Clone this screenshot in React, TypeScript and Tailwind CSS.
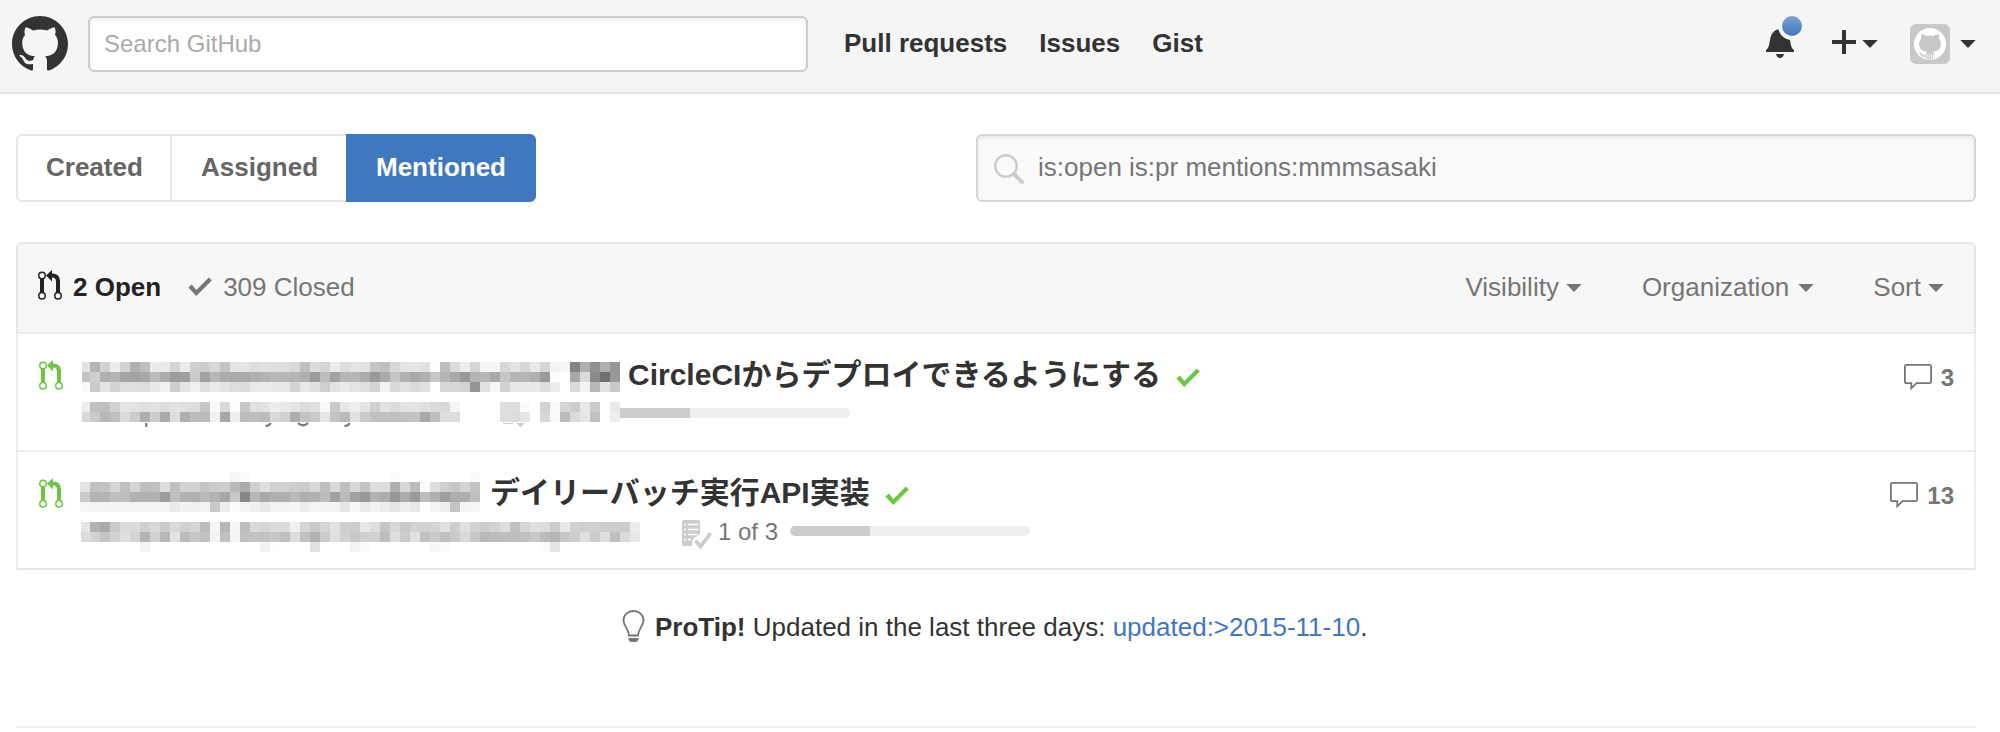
import React from "react";

const MARK =
  "M8 0C3.58 0 0 3.58 0 8c0 3.54 2.29 6.53 5.47 7.59.4.07.55-.17.55-.38 0-.19-.01-.82-.01-1.49-2.01.37-2.53-.49-2.69-.94-.09-.23-.48-.94-.82-1.13-.28-.15-.68-.52-.01-.53.63-.01 1.08.58 1.23.82.72 1.21 1.87.87 2.33.66.07-.52.28-.87.51-1.07-1.78-.2-3.64-.89-3.64-3.95 0-.87.31-1.59.82-2.15-.08-.2-.36-1.02.08-2.12 0 0 .67-.21 2.2.82.64-.18 1.32-.27 2-.27.68 0 1.36.09 2 .27 1.53-1.04 2.2-.82 2.2-.82.44 1.1.16 1.92.08 2.12.51.56.82 1.27.82 2.15 0 3.07-1.87 3.75-3.65 3.95.29.25.54.73.54 1.48 0 1.07-.01 1.93-.01 2.2 0 .21.15.46.55.38A8.013 8.013 0 0016 8c0-4.42-3.58-8-8-8z";

function Caret({ className }: { className: string }) {
  return (
    <svg className={className} width="16" height="8" viewBox="0 0 16 8">
      <path d="M.300 0h15.400L8 8z" fill="currentColor" />
    </svg>
  );
}

function PullRequestIcon({ className }: { className: string }) {
  return (
    <svg className={className} width="24" height="30" viewBox="0 0 24 30" fill="none" stroke="currentColor">
      <path d="M4 9v13" strokeWidth="4" />
      <path d="M20 22V11.500Q20 5.500 14 5.500H12" strokeWidth="4" />
      <path d="M8 5.500L14 0v11.500z" fill="currentColor" stroke="none" />
      <circle cx="4" cy="5.600" r="3.250" strokeWidth="1.500" />
      <circle cx="4" cy="25.700" r="3.250" strokeWidth="1.500" />
      <circle cx="20" cy="25.700" r="3.250" strokeWidth="1.500" />
    </svg>
  );
}

function Check({ className }: { className: string }) {
  return (
    <svg className={className} width="24" height="20" viewBox="0 0 24 20">
      <path d="M20.800.500L23.800 3.600 8.200 19 .400 10.600 3.800 7.400 8.400 12.900z" fill="currentColor" />
    </svg>
  );
}

function CommentIcon() {
  return (
    <svg width="28" height="28" viewBox="0 0 28 28" fill="none" stroke="currentColor" strokeWidth="1.800">
      <path d="M2.300.9h23.400q1.400 0 1.400 1.400v15.400q0 1.400-1.400 1.400H12.500L7.300 24.300V19.100h-5Q.9 19.100.9 17.700V2.300Q.9.9 2.300.9z" />
    </svg>
  );
}

function TaskIcon() {
  return (
    <svg width="30" height="30" viewBox="0 0 30 30">
      <path d="M2 0h14q2 0 2 2v12l-6 4-2 4v4H2q-2 0-2-2V2q0-2 2-2z" fill="#ccc" />
      <path d="M2 4.500h2M6 4.500h10.500M2 9.500h2M6 9.500h10.500M2 14.500h2M6 14.500h9M2 19.500h2M6 19.500h3" stroke="#fff" strokeWidth="1.300" />
      <path d="M27.500 14L18.500 24l-4-4" stroke="#fff" strokeWidth="7" fill="none" />
      <path d="M27.300 12l2.700 2.600L18.500 29.500 12 22l2.700-2.700 3.800 4z" fill="#ccc" />
    </svg>
  );
}

type Strip = { w: number; h: number; first: number; rows: string[]; marks?: React.ReactNode };

/* Each pair of hex digits is the grey level of one 10px block. */
function Mosaic({ w, h, first, rows, marks }: Strip) {
  return (
    <svg className="block shrink-0" width={w} height={h} viewBox={`0 0 ${w} ${h}`} shapeRendering="crispEdges">
      {rows.map((row, y) =>
        row.split(" ").map((g, i) => (
          <rect
            key={`${y}-${i}`}
            x={i === 0 ? 0 : first + (i - 1) * 10}
            y={y * 10}
            width={i === 0 ? first : 10}
            height="10"
            fill={`#${g}${g}${g}`}
          />
        ))
      )}
      {marks}
    </svg>
  );
}

const title1: Strip = {
  w: 538,
  h: 30,
  first: 8,
  rows: [
    "e3 b5 d2 ed d3 b0 bd eb ea d5 eb cf ce d7 c3 e4 e5 dc e1 df df d9 c0 dc d5 eb dd e4 e2 c5 bf d9 e4 e5 e1 fd be db ed d6 f4 f6 d8 e3 d6 e9 d6 f3 f6 84 af 91 af 96",
    "c4 d0 b0 b5 a5 a3 a8 bb ad 9d a0 ca a2 b8 ac aa aa b0 b3 b8 b6 b5 b0 9b bd a2 b6 b7 ac 9b ab c6 b1 a9 b0 c6 b6 a9 9a b3 b7 aa c6 b6 b5 b0 9a fd ff a8 da 8b 70 99",
    "fb cb e4 d2 df df de e9 f0 ce e6 f0 e0 ea e4 dd dc e9 ea e9 e8 d5 e8 e0 ce e3 ea e3 df d5 f3 da e2 dc e1 ff d8 d7 d4 96 e1 f7 d2 e8 e8 e8 df ec ff da f3 b8 e1 c9",
  ],
};

const meta1: Strip = {
  w: 538,
  h: 28,
  first: 8,
  rows: [
    "ed c0 c0 d1 e4 e3 df e2 dd e3 e0 dd c6 fa d9 fd c6 e0 e3 ed ea e4 db e1 f9 c9 e6 ef e3 cf e3 dc e3 e4 e0 da d9 f4 ff ff ff ff de de fb ff d2 f9 d5 cc e8 cb ff e8",
    "d8 cb b8 c0 db cd ae cd ab de af bd bb f1 a7 ee bd bf bb d9 d2 ad c3 ca e6 c4 b9 e2 cb c1 c1 c1 c1 c3 a9 be de dd ff ff ff ff dd dc e6 ff d8 fa bb db e6 c0 ff ee",
  ],
  marks: (
    <g shapeRendering="geometricPrecision">
      <path d="M63 21h2.500v4H63z" fill="#888" />
      <path d="M188.500 21q-1 3-5 3" fill="none" stroke="#777" strokeWidth="2.300" />
      <path d="M267.500 21q-1 3-5 3" fill="none" stroke="#777" strokeWidth="2.300" />
      <path d="M216 21q5 4.500 10 0" fill="none" stroke="#777" strokeWidth="2.300" />
      <path d="M421 21h10v1h-10zM434.500 21h8l-4 4.500z" fill="#ccc" />
    </g>
  ),
};

const title2: Strip = {
  w: 400,
  h: 40,
  first: 10,
  rows: [
    "ff ff ff ff ff ff ff ff ff ff ff ff ff ff ff f6 fb ff ff ff ff ff ff ff ff ff ff ff ff ff ff fb ff ff ff ff ff ff ff fa",
    "e4 c0 c4 d5 c0 d4 bf c0 de c0 d3 d3 c5 cb cd ba ac d0 df d2 d2 cd cc d8 bf d9 bf d8 c4 de dd b0 d7 bb fb dd cf c6 d4 c3",
    "cb b3 b4 be be b2 b1 b1 9d c0 b1 b1 bb b3 a8 c7 88 b7 a9 b0 b0 ba af b0 bc a1 bb a1 98 b3 ad 98 ab 9b be b0 9f ae b0 c0",
    "f6 f4 f4 f3 f4 f4 f4 f5 f4 ea f2 f0 f2 c9 ec fb f4 f0 e8 f3 f3 f5 ec f4 f3 f3 e5 f8 ea f3 ec e5 ee e8 ff f4 ee c5 f4 f6",
  ],
};

const meta2: Strip = {
  w: 559,
  h: 30,
  first: 9,
  rows: [
    "e6 b2 aa cb dc dc cf d9 cb d8 d0 d5 bc f6 b6 f6 be da d6 db db f0 d5 c9 d5 e2 cf cd e8 df c6 d9 c9 d3 d2 d4 e1 ce e0 d3 cd d2 dc c2 d4 e0 dc cc e8 d2 cf d0 ce cd cd ed",
    "dc d2 c4 d3 e0 d4 b5 d2 b8 e4 bc c8 c2 f3 c0 f5 c2 c3 c3 c7 c0 de c1 b2 cb e0 d2 c8 d0 d2 be df cb e1 c1 cb c0 ca d9 c8 ba bd bd bf c0 c8 bc b6 c6 cd df cd df c0 dc e8",
    "ff ff ff ff ff ff f4 ff ff ff ff ff ff ff ff ff ff ff f2 fd ff ff ff e2 ff ff ff f3 fc ff ff ff ff ff ff f8 fb ff ff ff ff ff ff ff ff ff fb e4 ff ff ff ff ff ff ff ff",
  ],
};

function Header() {
  return (
    <header className="flex h-[94px] items-start border-b-2 border-[#e5e5e5] bg-[#f5f5f5] pl-3 pr-6">
      <svg className="mt-4 shrink-0 text-[#333]" width="56" height="56" viewBox="0 0 16 16">
        <path d={MARK} fill="currentColor" />
      </svg>
      <div className="ml-5 mt-4 flex h-14 w-[720px] items-center rounded-[6px] border-2 border-[#ccc] bg-white pl-[14px] text-[24px] leading-none text-[#aaa] shadow-[inset_0_2px_4px_rgba(0,0,0,0.075)]">
        <span className="-mt-px">Search GitHub</span>
      </div>
      <nav className="ml-9 mt-[28px] flex gap-8 text-[26px] font-bold leading-[30px] text-[#333]">
        <a>Pull requests</a>
        <a>Issues</a>
        <a>Gist</a>
      </nav>
      <div className="ml-auto flex h-[92px] items-start text-[#333]">
        <svg className="mt-3" width="44" height="48" viewBox="0 0 44 48">
          <defs>
            <linearGradient id="dot" x1="0" y1="0" x2="0" y2="1">
              <stop offset="0" stopColor="#7aa1d3" />
              <stop offset="1" stopColor="#4078c0" />
            </linearGradient>
          </defs>
          <path d="M4 40v-2c3-2 3-5 4-10 1-7 5-11 10-11s9 4 10 11c1 5 1 8 4 10v2zM14 42h8q-1 4-4 4t-4-4z" fill="currentColor" />
          <circle cx="30" cy="14" r="14" fill="#f5f5f5" />
          <circle cx="30" cy="14" r="10" fill="url(#dot)" />
        </svg>
        <svg className="ml-[26px] mt-[30px]" width="24" height="24" viewBox="0 0 24 24">
          <path d="M10 0h4v10h10v4H14v10h-4V14H0v-4h10z" fill="currentColor" />
        </svg>
        <Caret className="ml-[6px] mt-10" />
        <svg className="ml-8 mt-6" width="40" height="40" viewBox="0 0 40 40">
          <rect width="40" height="40" rx="6" fill="#c8c8c8" />
          <circle cx="20" cy="20" r="16" fill="#fff" />
          <path
            d="M11.500 10.200q3 0 5 1.800 3.500-.8 7 0 2-1.800 5-1.800 1 2.600.5 4.800 2 2.500 2 5 0 7-8 7.800 1.300 1.500 1.300 3v4.500q-2 .7-4.300.7t-4.300-.7v-2.500q-4 .8-5.200-1.800-.8-1.800-2-2.500 2.500-.5 3.800 1.800 1.200 1.500 3.400.7.200-2 1.300-3.200-8-.8-8-7.800 0-2.500 2-5-.5-2.200.5-4.800z"
            fill="#c8c8c8"
          />
          <path d="M17 30v6M19.300 30v6M21.500 30v6M23.500 30v6" stroke="#fff" strokeWidth=".8" />
        </svg>
        <Caret className="ml-[10px] mt-10" />
      </div>
    </header>
  );
}

function Filters() {
  return (
    <div className="mt-10 flex h-[68px] justify-between">
      <div className="flex text-[26px] font-bold leading-[62px] text-[#666]">
        <a className="w-[156px] rounded-l-[6px] border-2 border-[#e5e5e5] pl-7">Created</a>
        <a className="w-[174px] border-y-2 border-[#e5e5e5] pl-[29px]">Assigned</a>
        <a className="w-[190px] rounded-r-[6px] border-y-2 border-[#4078c0] bg-[#4078c0] pl-[30px] text-white">Mentioned</a>
      </div>
      <div className="flex w-[1000px] rounded-[6px] border-2 border-[#d5d5d5] bg-[#fafafa] pl-4 text-[26px] leading-[62px] text-[#767676] shadow-[inset_0_2px_4px_rgba(0,0,0,0.075)]">
        <svg className="mt-[18px]" width="30" height="30" viewBox="0 0 30 30" fill="none" stroke="#ccc">
          <circle cx="12" cy="12" r="10.800" strokeWidth="2.400" />
          <path d="M20.500 20.500l7.500 7.500" strokeWidth="4" strokeLinecap="round" />
        </svg>
        <span className="ml-[14px]">is:open is:pr mentions:mmmsasaki</span>
      </div>
    </div>
  );
}

function Row({ title, titleStrip, metaStrip, comments, second }: { title: string; titleStrip: Strip; metaStrip: Strip; comments: number; second?: boolean }) {
  return (
    <li className={second ? "flex h-[118px] border-b-2 border-b-[#e5e5e5] pl-[21px] pr-5" : "flex h-[118px] border-b-2 border-b-[#eee] pl-[21px] pr-5"}>
      <PullRequestIcon className="mt-[26px] shrink-0 text-[#6cc644]" />
      <div className={second ? "ml-[17px] flex flex-col" : "ml-[19px] flex flex-col"}>
        <div className={second ? "flex h-[50px] pt-5" : "flex h-[58px] pt-7"}>
          <Mosaic {...titleStrip} />
          <h2
            className={
              second
                ? "mt-[1px] ml-[10px] whitespace-nowrap text-[30px] font-bold leading-[40px] text-[#333]"
                : "-mt-[7px] ml-[8px] whitespace-nowrap text-[30px] font-bold leading-[40px] text-[#333]"
            }
          >
            {title}
          </h2>
          <Check className={second ? "ml-[15px] mt-[14px] text-[#6cc644]" : "ml-[15px] mt-[6px] text-[#6cc644]"} />
        </div>
        {second ? (
          <div className="mt-5 flex h-[30px] pl-px">
            <Mosaic {...metaStrip} />
            <div className="ml-[42px] flex">
              <div className="-mt-[2px]">
                <TaskIcon />
              </div>
              <span className="-mt-[5px] ml-[6px] w-[72px] whitespace-nowrap text-[24px] leading-[30px] text-[#767676]">1 of 3</span>
              <div className="mt-1 h-[10px] w-[240px] overflow-hidden rounded-[5px] bg-[#eee]">
                <div className="h-full w-1/3 bg-[#ccc]" />
              </div>
            </div>
          </div>
        ) : (
          <div className="mt-[10px] flex">
            <Mosaic {...metaStrip} />
            <div className="mt-[6px] h-[10px] w-[230px] overflow-hidden rounded-r-[5px] bg-[#eee]">
              <div className="h-full w-[70px] bg-[#ccc]" />
            </div>
          </div>
        )}
      </div>
      <div className="ml-auto mt-[30px] flex text-[#767676]">
        <CommentIcon />
        <span className="-mt-px ml-[9px] text-[24px] font-bold leading-[30px]">{comments}</span>
      </div>
    </li>
  );
}

export default function App() {
  return (
    <div className="h-[732px] w-[2000px] overflow-hidden bg-white font-['Liberation_Sans','Noto_Sans_CJK_JP',sans-serif]">
      <Header />
      <main className="pl-4 pr-6">
        <Filters />
        <section className="mt-10">
          <div className="flex h-[92px] rounded-t-[6px] border-2 border-[#e5e5e5] border-b-[#eee] bg-[#f7f7f7] pl-5 pr-[30px] text-[26px] leading-[86px] text-[#767676]">
            <PullRequestIcon className="mt-[26px] text-[#222]" />
            <span className="ml-[11px] font-bold text-[#222]">2 Open</span>
            <Check className="ml-[27px] mt-[33px]" />
            <span className="ml-[11px]">309 Closed</span>
            <div className="ml-auto flex">
              <span>Visibility</span>
              <Caret className="ml-[7px] mt-10" />
              <span className="ml-[60px]">Organization</span>
              <Caret className="ml-[9px] mt-10" />
              <span className="ml-[59px]">Sort</span>
              <Caret className="ml-[7px] mt-10" />
            </div>
          </div>
          <ul className="border-x-2 border-[#eee]">
            <Row title="CircleCIからデプロイできるようにする" titleStrip={title1} metaStrip={meta1} comments={3} />
            <Row title="デイリーバッチ実行API実装" titleStrip={title2} metaStrip={meta2} comments={13} second />
          </ul>
        </section>
        <p className="mt-10 flex h-[116px] pl-[606px] text-[26px] leading-[34px] text-[#333]">
          <svg className="mr-[10px]" width="23" height="34" viewBox="0 0 23 34">
            <path
              d="M7 25.500C6.500 18.500 1.500 15.500 1.500 10.500 1.500 5 6 1 11.500 1S21.500 5 21.500 10.500c0 5-5 8-5.500 15z"
              fill="none"
              stroke="#767676"
              strokeWidth="1.800"
            />
            <path d="M6.500 28h10v1.500q-1 2.500-3 2.500h-4q-2 0-3-2.500z" fill="#767676" />
          </svg>
          <span className="whitespace-pre">
            <b>ProTip!</b> Updated in the last three days: <a className="text-[#4078c0]">{"updated:>2015-11-10"}</a>.
          </span>
        </p>
        <hr className="border-t-2 border-[#eee]" />
      </main>
    </div>
  );
}
